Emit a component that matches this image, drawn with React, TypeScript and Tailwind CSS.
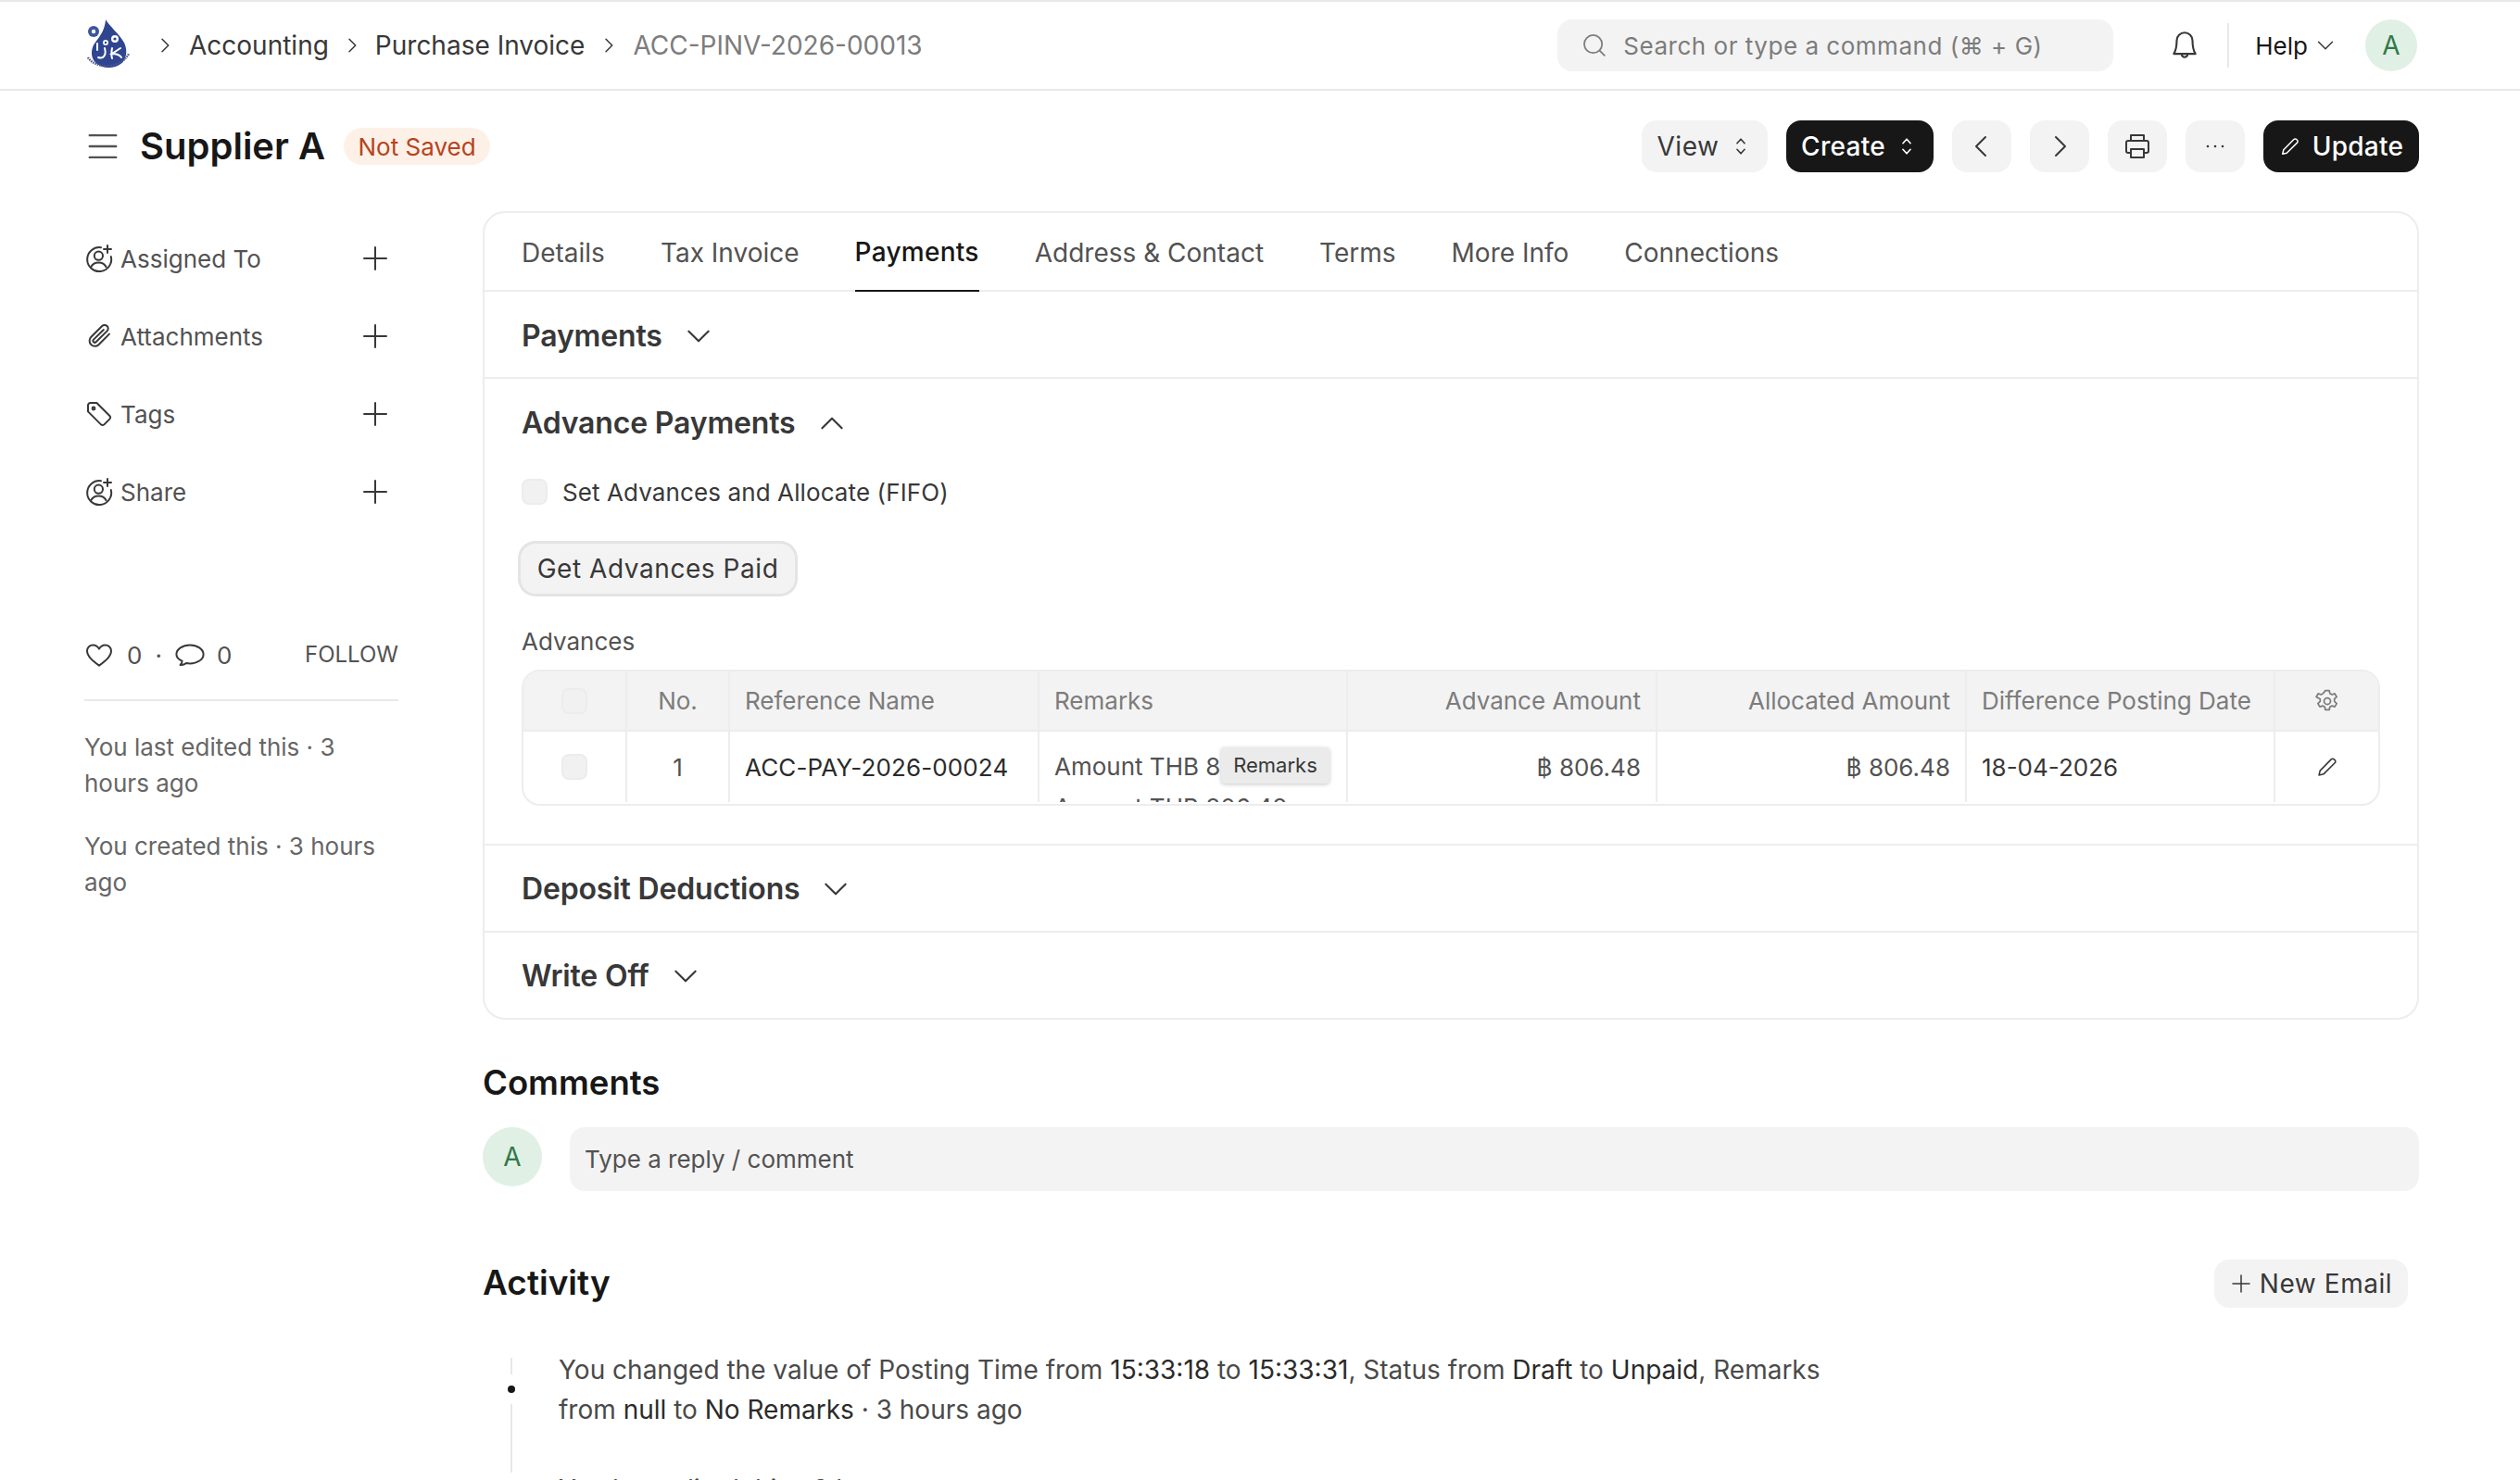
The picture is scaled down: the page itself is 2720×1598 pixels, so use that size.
import type { ReactNode } from "react";

const FONT = "[font-family:Inter,'Noto_Sans',sans-serif]";

function Ico({ size = 32, children, className = "" }: { size?: number; children: ReactNode; className?: string }) {
  return (
    <svg
      width={size}
      height={size}
      viewBox="0 0 16 16"
      fill="none"
      stroke="currentColor"
      strokeWidth={1}
      strokeLinecap="round"
      strokeLinejoin="round"
      className={`shrink-0 ${className}`}
    >
      {children}
    </svg>
  );
}

const ChevronDown = ({ size = 34 }: { size?: number }) => (
  <Ico size={size}><path d="M3 5.500l5 5 5-5" /></Ico>
);
const ChevronUp = ({ size = 34 }: { size?: number }) => (
  <Ico size={size}><path d="M3 10.500l5-5 5 5" /></Ico>
);
const ChevronRight = ({ size = 24 }: { size?: number }) => (
  <Ico size={size}><path d="M6 3.500l4.500 4.500L6 12.500" /></Ico>
);
const UpDown = () => (
  <Ico size={26}><path d="M5.500 6L8 3.200 10.500 6M5.500 10L8 12.800 10.500 10" /></Ico>
);
const Pencil = ({ size = 24 }: { size?: number }) => (
  <Ico size={size}><path d="M2.500 13.500l.7-3L10.600 3a1.300 1.300 0 011.900 0l.5.5a1.300 1.300 0 010 1.900L5.500 12.800z" /></Ico>
);
const Plus = ({ size = 32 }: { size?: number }) => (
  <Ico size={size}><path d="M8 2v12M2 8h12" /></Ico>
);
const UserPlus = () => (
  <Ico>
    <path d="M9 2.100A6.500 6.500 0 1014.400 7" />
    <circle cx="7.700" cy="6.600" r="2.300" />
    <path d="M3.600 12.600c.8-1.600 2.300-2.400 4.100-2.400s3.300.8 4.100 2.400" />
    <path d="M12.500 1v4M10.500 3h4" />
  </Ico>
);

function Logo() {
  return (
    <svg width="50" height="56" viewBox="0 0 50 56" className="shrink-0">
      <path d="M21 0c4 7 14 15 20 25 6 13 0 27-16 27C11 52 3 42 7 30c3-8 13-14 14-30z" fill="#2f4590" />
      <circle cx="8" cy="13" r="6" fill="#3d55a0" />
      <circle cx="8" cy="13" r="2.200" fill="#fff" />
      <circle cx="31" cy="21" r="4" fill="#fff" />
      <circle cx="31" cy="21" r="1.600" fill="#2f4590" />
      <circle cx="21" cy="25" r="3" fill="#fff" />
      <circle cx="21" cy="25" r="1.200" fill="#2f4590" />
      <path d="M12 26v7M20 31c2 7-1 12-7 10M28 31c-1 5-1 8 0 11M37 31l-9 6c4 0 8 1 10 4" fill="none" stroke="#fff" strokeWidth="2" strokeLinecap="round" />
      <path d="M2 41c6 11 34 15 44-4" fill="none" stroke="#46558e" strokeWidth="2.400" strokeDasharray="1.500 1" />
    </svg>
  );
}

function TopBar() {
  return (
    <div className="flex h-[98px] items-center border-t-2 border-b-2 border-[#e8e8e8] pl-[93px] pr-[111px]">
      <Logo />
      <div className="ml-[23px] flex items-center text-[28px] text-[#383838]">
        <ChevronRight />
        <span className="ml-[14px]">Accounting</span>
        <span className="ml-[13px]"><ChevronRight /></span>
        <span className="ml-[13px]">Purchase Invoice</span>
        <span className="ml-[14px]"><ChevronRight /></span>
        <span className="ml-[14px] text-[#7c7c7c]">ACC-PINV-2026-00013</span>
      </div>
      <div className="ml-auto flex h-[56px] w-[600px] items-center rounded-[16px] bg-[#f3f3f3] pl-[26px] text-[26px] tracking-[0.02em] text-[#7c7c7c]">
        <Ico size={28}><circle cx="7.200" cy="7.200" r="5.500" /><path d="M11.200 11.200l3 3" /></Ico>
        <span className="ml-[17px]">Search or type a command (⌘ + G)</span>
      </div>
      <span className="ml-[60px] text-[#383838]">
        <Ico size={34}><path d="M8 1.500a4 4 0 00-4 4c0 3-.4 5-1.500 6.800h11C12.400 10.500 12 8.500 12 5.500a4 4 0 00-4-4zM6.500 12.500a1.500 1.500 0 003 0" /></Ico>
      </span>
      <div className="ml-[29px] h-[48px] w-[2px] bg-[#e8e8e8]" />
      <span className="ml-[28px] text-[26px] text-[#171717]">Help</span>
      <span className="ml-[7px] text-[#383838]"><ChevronDown size={24} /></span>
      <div className="ml-[31px] flex h-[56px] w-[56px] items-center justify-center rounded-full bg-[#e0f0e4] text-[28px] text-[#30794a]">A</div>
    </div>
  );
}

function GrayBtn({ children, className = "" }: { children: ReactNode; className?: string }) {
  return (
    <div className={`flex h-[56px] items-center justify-center rounded-[16px] bg-[#f3f3f3] text-[28px] tracking-[0.02em] text-[#383838] ${className}`}>
      {children}
    </div>
  );
}

function DarkBtn({ children, className = "" }: { children: ReactNode; className?: string }) {
  return (
    <div className={`flex h-[56px] items-center justify-center rounded-[16px] bg-[#171717] text-[28px] font-medium tracking-[0.01em] text-white ${className}`}>
      {children}
    </div>
  );
}

const ChevronLeftBig = () => (
  <Ico size={32}><path d="M10 3L5 8l5 5" /></Ico>
);

function PageHead() {
  return (
    <div className="flex h-[120px] items-center pl-[92px] pr-[109px]">
      <span className="text-[#525252]">
        <Ico size={38}><path d="M2 3h12M2 8h12M2 13h12" /></Ico>
      </span>
      <h1 className="ml-[21px] text-[40px] font-semibold leading-none text-[#171717]">Supplier A</h1>
      <span className="ml-[20px] flex h-[40px] w-[158px] items-center justify-center rounded-[20px] bg-[#fdf1e7] text-[26px] text-[#b7431d]">Not Saved</span>
      <div className="ml-auto flex items-center gap-[20px]">
        <GrayBtn className="w-[136px] gap-[10px]">View <UpDown /></GrayBtn>
        <DarkBtn className="w-[159px] gap-[10px]">Create <UpDown /></DarkBtn>
        <GrayBtn className="w-[64px]"><ChevronLeftBig /></GrayBtn>
        <GrayBtn className="w-[64px]"><Ico size={32}><path d="M6 3l5 5-5 5" /></Ico></GrayBtn>
        <GrayBtn className="w-[64px]">
          <Ico size={32}><path d="M4.500 5V2h7v3M4.500 11.500H3a1 1 0 01-1-1V6a1 1 0 011-1h10a1 1 0 011 1v4.500a1 1 0 01-1 1h-1.500M4.500 9.500h7V14h-7z" /></Ico>
        </GrayBtn>
        <GrayBtn className="w-[64px]">
          <Ico size={32}><path d="M4 8h.01M8 8h.01M12 8h.01" strokeWidth={1.300} /></Ico>
        </GrayBtn>
        <DarkBtn className="w-[168px] gap-[12px]"><Pencil />Update</DarkBtn>
      </div>
    </div>
  );
}

const SIDE_ITEMS = [
  { label: "Assigned To", icon: <UserPlus /> },
  {
    label: "Attachments",
    icon: (
      <Ico>
        <path d="M13.500 6.800l-5.800 5.800a2.900 2.900 0 01-4.100-4.100l6-6a1.900 1.900 0 012.700 2.700l-6 5.900a.9.9 0 01-1.300-1.300l5.400-5.300" />
      </Ico>
    ),
  },
  {
    label: "Tags",
    icon: (
      <Ico>
        <path d="M2 3.300A1.300 1.300 0 013.300 2h3.400l7 7a1.200 1.200 0 010 1.700l-3 3a1.200 1.200 0 01-1.700 0l-7-7z" />
        <circle cx="5" cy="5" r=".7" />
      </Ico>
    ),
  },
  { label: "Share", icon: <UserPlus /> },
];

function Sidebar() {
  return (
    <aside className="w-[339px] shrink-0 pt-[9px] text-[26px] text-[#525252]">
      {SIDE_ITEMS.map((item) => (
        <div key={item.label} className="flex h-[84px] items-center">
          <span className="text-[#383838]">{item.icon}</span>
          <span className="ml-[7px]">{item.label}</span>
          <span className="ml-auto mr-[9px] text-[#383838]"><Plus /></span>
        </div>
      ))}
      <div className="mt-[110px] flex h-[48px] items-center">
        <span className="text-[#383838]">
          <Ico>
            <path d="M8 13.800C5 11.600 1.500 9 1.500 5.900 1.500 4 3 2.700 4.700 2.700c1.300 0 2.600.8 3.300 2.100.7-1.300 2-2.100 3.300-2.100 1.700 0 3.200 1.300 3.200 3.200 0 3.100-3.500 5.700-6.500 7.900z" />
          </Ico>
        </span>
        <span className="ml-[14px]">0</span>
        <span className="ml-[14px]">·</span>
        <span className="ml-[14px] text-[#383838]">
          <Ico>
            <path d="M8 2.700c3.900 0 7.300 2.200 7.300 5s-3.400 5-7.300 5c-.7 0-1.400-.1-2-.2-.8.7-2 1.100-3.200 1 .6-.6 1-1.400 1-2.200C1.700 10.400.7 9.100.7 7.700c0-2.800 3.400-5 7.300-5z" />
          </Ico>
        </span>
        <span className="ml-[13px]">0</span>
        <span className="ml-auto text-[24px]">FOLLOW</span>
      </div>
      <div className="mt-[24px] h-[2px] bg-[#e8e8e8]" />
      <p className="mt-[30px] leading-[39px] text-[#666666]">You last edited this · 3 hours ago</p>
      <p className="mt-[29px] leading-[39px] text-[#666666]">You created this · 3 hours ago</p>
    </aside>
  );
}

const TABS = ["Details", "Tax Invoice", "Payments", "Address & Contact", "Terms", "More Info", "Connections"];

function Tabs() {
  return (
    <div className="flex h-[85px] gap-[60px] border-b-2 border-[#ededed] pl-[40px] text-[28px] text-[#525252]">
      {TABS.map((tab) =>
        tab === "Payments" ? (
          <div key={tab} className="flex h-[85px] items-center border-b-2 border-[#171717] font-medium tracking-[0.01em] text-[#171717]">{tab}</div>
        ) : (
          <div key={tab} className="flex h-[85px] items-center">{tab}</div>
        ),
      )}
    </div>
  );
}

function SectionHead({ title, open = false }: { title: string; open?: boolean }) {
  return (
    <div className="flex items-center gap-[22px] text-[32px] font-semibold leading-[40px] tracking-[-0.005em] text-[#383838]">
      {title}
      <span className="font-normal">{open ? <ChevronUp /> : <ChevronDown />}</span>
    </div>
  );
}

function Checkbox() {
  return <span className="block h-[28px] w-[28px] rounded-[8px] border-2 border-[#ececec] bg-[#f1f1f1]" />;
}

const COL = "flex items-center border-r-2 border-[#ededed] px-[16px] whitespace-nowrap";

function AdvancesTable() {
  return (
    <div className="relative mt-[12px] h-[147px] w-[2006px] overflow-hidden rounded-[20px] border-2 border-[#ededed] text-[26px]">
      <div className="flex h-[65px] border-b-2 border-[#ededed] bg-[#f3f3f3] text-[#7c7c7c]">
        <div className={`${COL} w-[112px] justify-center`}><Checkbox /></div>
        <div className={`${COL} w-[111px] justify-center`}>No.</div>
        <div className={`${COL} w-[334px]`}>Reference Name</div>
        <div className={`${COL} w-[333px]`}>Remarks</div>
        <div className={`${COL} w-[334px] justify-end`}>Advance Amount</div>
        <div className={`${COL} w-[334px] justify-end`}>Allocated Amount</div>
        <div className={`${COL} w-[333px]`}>Difference Posting Date</div>
        <div className="flex flex-1 items-center justify-center"><Ico size={28}><circle cx="8" cy="8" r="2" /><path d="M6.800 1.500h2.400l.4 1.800 1.300.7 1.700-.6 1.200 2-1.400 1.300v1.500l1.400 1.300-1.200 2-1.700-.6-1.300.7-.4 1.800H6.800l-.4-1.800-1.300-.7-1.700.6-1.200-2 1.400-1.300V6.700L1.200 5.400l1.200-2 1.700.6 1.300-.7z" /></Ico></div>
      </div>
      <div className="flex h-[76px] text-[#383838]">
        <div className={`${COL} w-[112px] justify-center`}><Checkbox /></div>
        <div className={`${COL} w-[111px] justify-center text-[#525252]`}>1</div>
        <div className={`${COL} w-[334px] tracking-[0.005em] text-[#2b2b2b]`}>ACC-PAY-2026-00024</div>
        <div className="w-[333px] overflow-hidden border-r-2 border-[#ededed] px-[16px] pt-[16px] leading-[44px] text-[#525252]">
          <div className="whitespace-nowrap">Amount THB 806.48 o</div>
          <div className="whitespace-nowrap">Amount THB 806.48 o</div>
        </div>
        <div className={`${COL} w-[334px] justify-end text-[#525252]`}>฿ 806.48</div>
        <div className={`${COL} w-[334px] justify-end text-[#525252]`}>฿ 806.48</div>
        <div className={`${COL} w-[333px] text-[#383838]`}>18-04-2026</div>
        <div className="flex flex-1 items-center justify-center"><Pencil size={26} /></div>
      </div>
      <div className="absolute left-[753px] top-[82px] flex h-[39px] w-[117px] items-center justify-center rounded-[4px] bg-[#ebebeb] text-[22px] tracking-normal text-[#383838] shadow-[0_1px_4px_rgba(0,0,0,0.22)]">Remarks</div>
    </div>
  );
}

function FormCard() {
  return (
    <div className="h-[873px] rounded-[24px] border-2 border-[#ededed]">
      <Tabs />
      <div className="flex h-[94px] items-center border-b-2 border-[#ededed] pl-[40px] pt-[3px]"><SectionHead title="Payments" /></div>
      <div className="h-[504px] border-b-2 border-[#ededed] pl-[40px] pt-[28px]">
        <SectionHead title="Advance Payments" open />
        <div className="mt-[34px] flex h-[40px] items-center gap-[16px] text-[26px] tracking-[0.004em] text-[#383838]">
          <Checkbox />
          Set Advances and Allocate (FIFO)
        </div>
        <div className="-ml-[1px] mt-[36px] flex h-[54px] w-[296px] items-center justify-center rounded-[16px] bg-[#f3f3f3] text-[28px] tracking-[0.02em] text-[#383838] shadow-[0_0_0_3px_#e4e4e4]">
          Get Advances Paid
        </div>
        <div className="mt-[34px] h-[36px] text-[26px] leading-[36px] text-[#525252]">Advances</div>
        <AdvancesTable />
      </div>
      <div className="flex h-[94px] items-center border-b-2 border-[#ededed] pl-[40px] pt-[2px]"><SectionHead title="Deposit Deductions" /></div>
      <div className="flex h-[92px] items-center pl-[40px] pt-[2px]"><SectionHead title="Write Off" /></div>
    </div>
  );
}

function Comments() {
  return (
    <section className="mt-[46px]">
      <h2 className="text-[36.5px] font-semibold leading-[44px] text-[#171717]">Comments</h2>
      <div className="mt-[26px] flex items-start">
        <div className="flex h-[64px] w-[64px] shrink-0 items-center justify-center rounded-full bg-[#e0f0e4] text-[28px] text-[#30794a]">A</div>
        <div className="ml-[30px] flex h-[69px] flex-1 items-center rounded-[16px] bg-[#f3f3f3] pl-[16px] text-[26px] text-[#525252]">Type a reply / comment</div>
      </div>
    </section>
  );
}

function Activity() {
  return (
    <section className="mt-[73px]">
      <div className="flex h-[52px] items-center pr-[12px]">
        <h2 className="text-[37px] font-semibold text-[#171717]">Activity</h2>
        <div className="ml-auto mt-[2px] flex h-[52px] w-[209px] items-center justify-center gap-[8px] rounded-[16px] bg-[#f3f3f3] text-[28px] tracking-[0.02em] text-[#383838]">
          <Plus size={24} />New Email
        </div>
      </div>
      <div className="mt-[55px] flex">
        <div className="relative h-[124px] w-[82px] shrink-0">
          <div className="absolute left-[30px] top-0 h-[18px] w-[2px] bg-[#e8e8e8]" />
          <div className="absolute left-[27px] top-[30px] h-[8px] w-[8px] rounded-full bg-[#171717]" />
          <div className="absolute left-[30px] top-[50px] h-[74px] w-[2px] bg-[#e8e8e8]" />
        </div>
        <div className="w-[1380px] text-[28px] leading-[43px] text-[#4a4a4a]">
          <p className="-mt-[8px]">
            You changed the value of Posting Time from <span className="text-[#2b2b2b]">15:33:18</span> to <span className="text-[#2b2b2b]">15:33:31</span>, Status from <span className="text-[#2b2b2b]">Draft</span> to <span className="text-[#2b2b2b]">Unpaid</span>, Remarks from <span className="text-[#2b2b2b]">null</span> to <span className="text-[#2b2b2b]">No Remarks</span> · 3 hours ago
          </p>
          <p className="mt-[43px]">You last edited this · 3 hours ago</p>
        </div>
      </div>
    </section>
  );
}

export default function App() {
  return (
    <div className={`h-[1598px] w-[2720px] overflow-hidden bg-white ${FONT}`}>
      <TopBar />
      <PageHead />
      <div className="flex pl-[91px] pr-[109px] pt-[10px]">
        <Sidebar />
        <main className="ml-[91px] flex-1">
          <FormCard />
          <Comments />
          <Activity />
        </main>
      </div>
    </div>
  );
}
